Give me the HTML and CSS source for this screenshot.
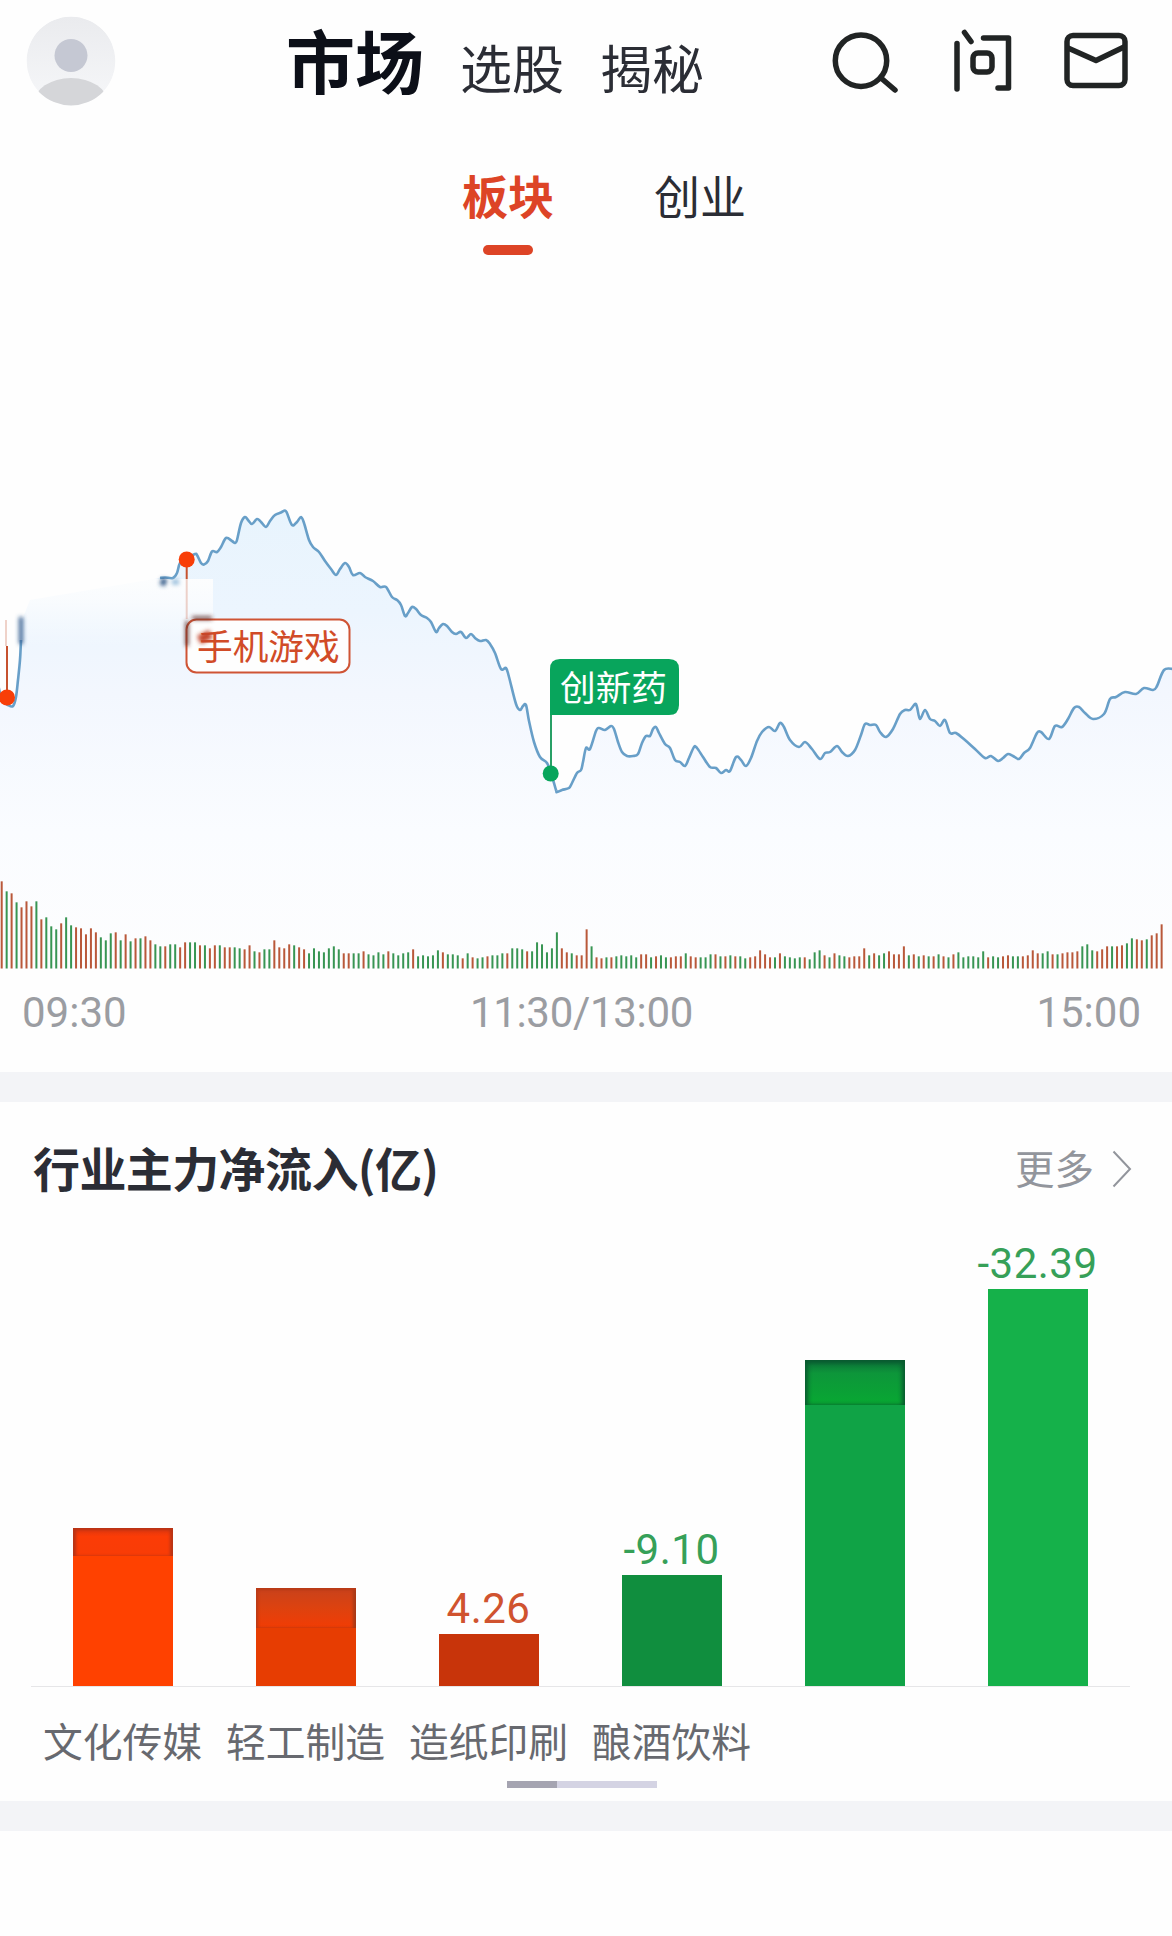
FILE: index.html
```html
<!DOCTYPE html>
<html lang="zh-CN">
<head>
    <meta charset="UTF-8">
    <meta name="viewport" content="width=device-width, initial-scale=1.0">
    <title>市场</title>
    <link rel="stylesheet" href="styles.css">
</head>
<body>
    <header class="topbar">
        <svg class="avatar" viewBox="0 0 90 90">
            <defs>
                <clipPath id="avatarClip"><circle cx="45" cy="45" r="44.5"/></clipPath>
                <linearGradient id="avatarBg" x1="0" y1="0" x2="0" y2="1">
                    <stop offset="0" stop-color="#eaebee"/>
                    <stop offset="1" stop-color="#f6f7f9"/>
                </linearGradient>
            </defs>
            <g clip-path="url(#avatarClip)">
                <circle cx="45" cy="45" r="44.5" fill="url(#avatarBg)"/>
                <circle cx="45" cy="39.500" r="16.5" fill="#c5c8d3"/>
                <ellipse cx="45" cy="87" rx="37" ry="25" fill="#d5d6d9"/>
            </g>
        </svg>
        <nav class="main-nav">
            <a class="active">市场</a>
            <a>选股</a>
            <a>揭秘</a>
        </nav>
        <div class="actions">
            <svg class="icon" viewBox="0 0 70 70" aria-label="搜索">
                <circle cx="33" cy="32.7" r="25.7"/>
                <path d="M53 50L67 62"/>
            </svg>
            <svg class="icon" viewBox="0 0 70 70" aria-label="问">
                <path d="M9 15.5V61M16.500 4.500L23 13.500M35.500 10H60.500V60H50"/>
                <rect x="25" y="25" width="19" height="19" rx="5"/>
            </svg>
            <svg class="icon icon-mail" viewBox="0 0 70 70" aria-label="消息">
                <rect x="7" y="7.500" width="58" height="50" rx="6"/>
                <path d="M8 20L36 32.500L64 19"/>
            </svg>
        </div>
    </header>

    <nav class="sub-nav">
        <a class="active">板块</a>
        <a>创业</a>
    </nav>

    <section class="trend">
        <svg class="trend-chart" viewBox="0 480 1172 490">
            <defs>
                <linearGradient id="area" gradientUnits="userSpaceOnUse" x1="0" y1="510" x2="0" y2="969">
                    <stop offset="0" stop-color="#e8f4fd"/>
                    <stop offset="0.22" stop-color="#ecf5fe"/>
                    <stop offset="0.4" stop-color="#f3f7fe"/>
                    <stop offset="0.7" stop-color="#fafcff"/>
                    <stop offset="1" stop-color="#fdfdfe"/>
                </linearGradient>
                <linearGradient id="haze" x1="0" y1="0" x2="0" y2="1">
                    <stop offset="0" stop-color="#fefefe" stop-opacity="0.9"/>
                    <stop offset="0.35" stop-color="#fefefe" stop-opacity="0.7"/>
                    <stop offset="1" stop-color="#fefefe" stop-opacity="0"/>
                </linearGradient>
                <filter id="soft" x="-50%" y="-50%" width="200%" height="200%"><feGaussianBlur stdDeviation="2"/></filter>
            </defs>
            <path id="areaFill" fill="url(#area)"/>
            <rect x="0" y="579" width="213" height="67" fill="url(#haze)"/>
            <g id="volume"></g>
            <path class="price-line" id="lineStart"/>
            <path class="price-line" id="lineMain"/>

            <path class="pole-up faded" d="M6 620V646"/>
            <path class="pole-up" d="M7 646V690"/>
            <circle class="dot-up" cx="7" cy="697.500" r="8"/>

            <path class="pole-up" d="M186.700 560V579"/>
            <path class="pole-up faded" d="M186.700 579V619"/>
            <circle class="dot-up" cx="186.700" cy="559.500" r="8"/>

            <rect class="tag-up" x="186.500" y="619.500" width="163" height="53" rx="10"/>
            <text class="tag-text tag-text-up" x="197" y="660">手机游戏</text>

            <g filter="url(#soft)">
                <path d="M21 617V644" stroke="#365f91" stroke-width="4"/>
                <path d="M161 581L166 583" stroke="#284f80" stroke-width="7"/>
                <path d="M172 582H179" stroke="#8fb8d8" stroke-width="5"/>
                <path d="M187 621V646M192 618H212" stroke="#5c2f2c" stroke-width="3"/>
                <path d="M199 640L211 634" stroke="#c4442c" stroke-width="9"/>
            </g>

            <path class="pole-down" d="M551 700V768"/>
            <circle class="dot-down" cx="550.700" cy="773.500" r="8"/>
            <path class="tag-down" d="M550 715V669Q550 659 560 659H669Q679 659 679 669V705Q679 715 669 715Z"/>
            <text class="tag-text" x="560" y="701">创新药</text>
        </svg>
        <div class="time-axis">
            <span>09:30</span>
            <span class="noon">11:30/13:00</span>
            <span>15:00</span>
        </div>
    </section>

    <section class="inflow">
        <div class="section-head">
            <h2>行业主力净流入(亿)</h2>
            <div class="more">
                <a>更多</a>
                <svg viewBox="0 0 20 38"><path d="M1.500 1.500L18 19L1.500 36.500"/></svg>
            </div>
        </div>
        <div class="bars" id="bars"></div>
        <div class="bar-labels">
            <span>文化传媒</span>
            <span>轻工制造</span>
            <span>造纸印刷</span>
            <span>酿酒饮料</span>
        </div>
        <div class="scroll-track"><div class="scroll-thumb"></div></div>
    </section>

    <section class="next-block"></section>

    <script src="script.js"></script>
</body>
</html>
```
FILE: styles.css
```css
body {
    margin: 0;
    background-color: #fefefe;
    color: #2b2d35;
    font-family: "Noto Sans CJK SC", sans-serif;
}

svg {
    display: block;
}

h2 {
    margin: 0;
}

.topbar {
    display: flex;
    height: 123px;
    box-sizing: border-box;
    padding: 16px 42px 0 26px;
}

.avatar {
    width: 90px;
    height: 90px;
}

.main-nav {
    display: flex;
    align-items: baseline;
    margin-left: 170px;
    padding-top: 9px;
    line-height: 1;
    font-size: 52px;
}

.main-nav a {
    margin-right: 36px;
}

.main-nav a.active {
    font-size: 69px;
    font-weight: bold;
    color: #0c0f18;
}

.actions {
    display: flex;
    gap: 50px;
    margin-left: auto;
    padding-top: 12px;
}

.icon {
    width: 70px;
    height: 70px;
    fill: none;
    stroke: #212424;
    stroke-width: 5.5;
    stroke-linecap: round;
    stroke-linejoin: round;
}

.icon-mail {
    margin-left: -8px;
}

.sub-nav {
    display: flex;
    gap: 100px;
    height: 357px;
    box-sizing: border-box;
    padding: 48px 0 0 462px;
    font-size: 46px;
    line-height: 1;
}

.sub-nav a.active {
    color: #dd4426;
    font-weight: bold;
}

.sub-nav a.active::after {
    content: "";
    display: block;
    width: 50px;
    height: 10px;
    margin: 28px 0 0 21px;
    border-radius: 5px;
    background-color: #dd4426;
}

.trend {
    height: 592px;
    border-bottom: 30px solid #f3f4f7;
}

.trend-chart {
    width: 1172px;
    height: 490px;
}

.price-line {
    fill: none;
    stroke: #689fc8;
    stroke-width: 2.6;
    stroke-linejoin: round;
}

.pole-up {
    stroke: #c6522f;
    stroke-width: 2;
}

.faded {
    opacity: 0.25;
}

.dot-up {
    fill: #f83e08;
}

.tag-up {
    fill: #fefefe;
    stroke: #cf5435;
    stroke-width: 2;
}

.tag-text {
    font-size: 35.7px;
    fill: #fff;
}

.tag-text-up {
    fill: #d14b27;
}

.pole-down {
    stroke: #28a066;
    stroke-width: 2;
}

.dot-down,
.tag-down {
    fill: #08a55c;
}

.vol-r {
    fill: #b9583a;
}

.vol-g {
    fill: #389553;
}

.time-axis {
    display: grid;
    grid-template-columns: 1fr auto 1fr;
    padding: 21px 31px 0 22px;
    font-family: Roboto, sans-serif;
    font-size: 42px;
    line-height: 44px;
    color: #9b9da2;
}

.time-axis .noon {
    letter-spacing: -0.3px;
}

.time-axis span:last-child {
    text-align: right;
}

.inflow {
    height: 699px;
    border-bottom: 30px solid #f3f4f7;
}

.section-head {
    display: flex;
    justify-content: space-between;
    align-items: center;
    height: 132px;
    box-sizing: border-box;
    padding: 2px 40px 0 33px;
}

.section-head h2 {
    margin-top: -6px;
    font-size: 47px;
    line-height: 1;
    letter-spacing: -0.6px;
}

.more {
    display: flex;
    align-items: center;
    gap: 18px;
    font-size: 39.5px;
    line-height: 1;
    color: #92959c;
}

.more a {
    margin-top: -4px;
}

.more svg {
    width: 20px;
    height: 38px;
    fill: none;
    stroke: #92959c;
    stroke-width: 2;
}

.bars {
    display: grid;
    grid-template-columns: repeat(6, 183px);
    align-items: end;
    height: 452px;
    margin: 0 42px 0 31px;
    border-bottom: 1px solid #e6e6e8;
}

.bar-item {
    display: flex;
    flex-direction: column;
    align-items: center;
    font-family: Roboto, sans-serif;
    font-size: 42px;
    line-height: 50px;
    letter-spacing: 0.5px;
    white-space: nowrap;
}

.bar-item.up {
    color: #d0532f;
}

.bar-item.down {
    color: #36a058;
}

.bar {
    width: 100px;
}

.cap-red {
    background: linear-gradient(#d93510, #fb3c06 30%, #f83c06);
    box-shadow: inset 3px 2px 3px #b83416, inset -3px 0 3px #b83416;
}

.cap-orange {
    background: linear-gradient(#c8421c, #dd420f 50%, #f23c04);
    box-shadow: inset 2px 2px 3px #b93a17, inset -3px 0 3px #a83a18;
}

.cap-green {
    background: linear-gradient(#0c7038, #0d963a 30%, #08a832);
    box-shadow: inset 3px 3px 4px #0a5a30, inset -3px 0 4px #0a5a30;
}

.bar-labels {
    display: grid;
    grid-template-columns: repeat(6, 183px);
    margin: 33px 42px 0 31px;
    font-size: 39.8px;
    line-height: 40px;
    text-align: center;
    color: #67696f;
}

.scroll-track {
    width: 150px;
    height: 7px;
    margin: 21px 0 0 507px;
    background-color: #d4d3e3;
}

.scroll-thumb {
    width: 50px;
    height: 7px;
    background-color: #a5a4b1;
}

.next-block {
    height: 105px;
}
```
FILE: script.js
```js
// opening minutes, before the gap in the data
const startPoints = [[-2,684],[2,700],[8,705],[13,706],[16,697],[18,680],[20,660],[21,640]];

const points = [
    [160,578],[165,577.5],[173,578],[177,573],[180,563],[186,559],[195,554],[197,555],[201,563],[204,564.5],
    [208,561],[212,551.5],[217,552],[221,547],[226,538],[232,541],[235,543],[237,540],[241,523],[245,517],
    [248,520],[252,524],[257,519],[261,522],[266,527],[270,521],[275,515],[281,512.5],[285,510.5],[287,513],
    [292,525],[297,522],[301,517],[304,523],[309,540],[313,547],[319,552],[325,561],[331,569],[336,575],
    [340,569],[345,563],[349,567],[353,575],[360,573],[365,577],[373,581],[380,587],[386,587],[392,597],
    [397,600],[401,605],[405,616],[408,613],[412,607],[416,609],[421,615],[427,618],[431,622],[436,632],
    [439,628],[443,624],[447,626],[452,632],[456,634],[461,632],[466,638],[471,634],[475,638],[480,641],
    [486,640],[490,644],[495,653],[501,669],[506,668],[509,677],[516,704],[520,710],[523,706],[526,705],
    [529,721],[534,742],[540,757],[547,763],[551,773],[556,790],[557,792],[562,790],[569,788],[572,783],
    [577,773],[581,770],[583,762],[586,748],[590,749],[596,731],[599,728],[605,730],[611,726],[614,729],
    [618,742],[622,752],[627,756],[633,756],[638,754],[642,743],[646,736],[650,736],[653,729],[656,727],
    [659,733],[665,744],[670,748],[675,760],[680,762],[685,766],[689,758],[694,747],[697,748],[703,757],
    [710,767],[716,768],[721,773],[726,770],[730,771],[736,757],[741,760],[746,766],[751,758],[757,741],
    [762,732],[769,727],[775,731],[780,723],[784,727],[790,740],[799,747],[805,742],[812,749],[820,759],
    [825,753],[830,752],[837,746],[842,752],[848,756],[855,750],[861,735],[865,724],[870,725],[876,725],
    [880,732],[886,737],[893,729],[900,714],[905,710],[910,710],[915,704],[917,707],[920,719],[925,710],
    [930,719],[935,721],[940,726],[945,720],[950,733],[956,733],[965,740],[975,749],[985,758],[991,756],
    [998,761],[1003,758],[1008,754],[1013,756],[1019,759],[1024,753],[1030,748],[1037,733],[1041,732],
    [1049,739],[1055,726],[1062,727],[1068,719],[1074,708],[1079,707],[1085,713],[1093,719],[1104,714],
    [1110,699],[1116,697],[1125,692],[1136,694],[1144,688],[1153,690],[1157,686],[1164,670],[1173,669]
];

// r = up, g = down; the number is the top of the stick in thirds of a pixel
const volume = `r64 g94 r100 g127 r142 r124 r139 g124 r178 g172 g199 g208 r190 g172 g196 r202 r205 r223 r205 r217
g232 g241 g220 r217 g241 r223 g244 r235 g235 r229 r241 g253 g259 r259 g253 g253 r262 r247 g247 g247
r256 g256 r265 r256 g256 r262 r262 g262 g265 r268 r256 g274 r277 g268 g268 r241 r262 r265 r253 g256
r262 r268 g280 g265 g274 g277 g265 g259 g268 r280 r280 g280 g280 r274 g283 g286 g277 g283 r274 g280
g286 g280 g277 r268 g289 g286 g289 g286 g271 r277 g283 g283 g286 r295 g280 r292 g295 g292 r289 g286
g286 g280 r280 g265 g265 g268 r274 g274 g247 g253 g277 g265 g217 r265 r277 g280 r286 r286 r208 g259
r292 r295 g292 r292 g289 g286 g289 g286 g292 r283 r283 g292 r289 g286 g292 r292 r289 r289 g280 r289
r292 g292 g292 g283 r283 g289 r289 g286 r289 g289 g295 r292 r289 r271 r283 r292 g292 r280 g289 g292
g295 g292 r292 g298 g277 g271 r286 g292 r280 g286 g289 r292 r289 r289 r265 g286 r280 g286 g280 r274
r283 r283 r259 g286 r283 g289 r286 g289 r289 g283 r289 g292 r283 g277 g292 g289 g289 g292 g274 r292
g289 g292 r289 r286 g289 g289 r289 r286 r271 r280 g280 g274 r283 g283 r280 r277 r277 r274 g259 g253
g271 r274 r268 r259 g259 r259 r256 g250 g235 r238 r241 g238 r226 r220 r193`.split(/\s+/);

const inflow = [
    { height: 158, color: '#ff4100', cap: 'cap-red', capHeight: 28, dir: 'up' },
    { height: 98, color: '#e73d02', cap: 'cap-orange', capHeight: 40, dir: 'up' },
    { value: '4.26', height: 52, color: '#c8340a', dir: 'up' },
    { value: '-9.10', height: 111, color: '#108e3e', dir: 'down' },
    { height: 326, color: '#10a346', cap: 'cap-green', capHeight: 45, dir: 'down' },
    { value: '-32.39', height: 397, color: '#15b14a', dir: 'down' }
];

function smooth(list) {
    let d = `M${list[0]}`;
    for (let i = 0; i < list.length - 1; i++) {
        const p0 = list[i - 1] || list[i];
        const p1 = list[i];
        const p2 = list[i + 1];
        const p3 = list[i + 2] || p2;
        d += `C${p1[0] + (p2[0] - p0[0]) / 6},${p1[1] + (p2[1] - p0[1]) / 6}`;
        d += ` ${p2[0] - (p3[0] - p1[0]) / 6},${p2[1] - (p3[1] - p1[1]) / 6} ${p2}`;
    }
    return d;
}

document.getElementById('lineStart').setAttribute('d', smooth(startPoints));
document.getElementById('lineMain').setAttribute('d', smooth(points));
document.getElementById('areaFill').setAttribute('d',
    smooth(points) + 'V969H0V700L14 706L22 620L30 600Z');

document.getElementById('volume').innerHTML = volume.map((item, i) => {
    const top = 860 + item.slice(1) / 3;
    return `<rect class="vol-${item[0]}" x="${0.7 + i * 4.957}" y="${top}" width="2" height="${968.5 - top}"/>`;
}).join('');

document.getElementById('bars').innerHTML = inflow.map(item => `
    <div class="bar-item ${item.dir}">
        ${item.value ? `<span>${item.value}</span>` : ''}
        <div class="bar" style="height: ${item.height}px; background-color: ${item.color}">
            ${item.cap ? `<div class="${item.cap}" style="height: ${item.capHeight}px"></div>` : ''}
        </div>
    </div>
`).join('');
```
